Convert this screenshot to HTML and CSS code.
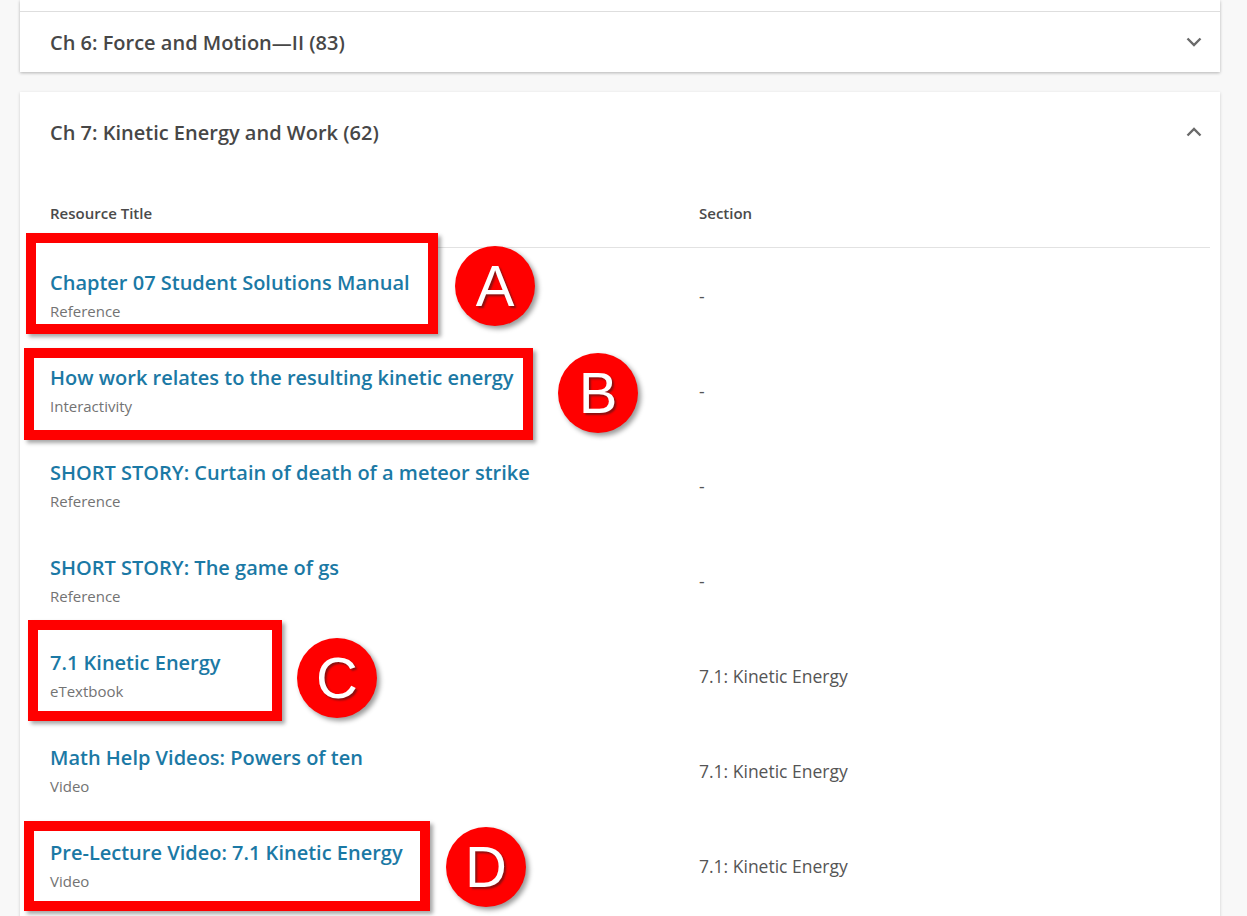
FILE: index.html
```html
<!DOCTYPE html>
<html lang="en">
<head>
<meta charset="utf-8">
<title>Resources</title>
<link rel="stylesheet" href="styles.css">
</head>
<body>
<div class="page">
  <div class="accordion">
    <div class="group">
      <div class="panel-stub"></div>
      <div class="panel-head bordered">
        <span class="panel-title">Ch 6: Force and Motion—II (83)</span>
        <svg class="chev" width="16" height="10" viewBox="0 0 16 10"><path d="M1.5 1.5 L8 8 L14.5 1.5" fill="none" stroke="#6a6a6a" stroke-width="2.4"/></svg>
      </div>
    </div>

    <div class="card">
      <div class="panel-head tall">
        <span class="panel-title">Ch 7: Kinetic Energy and Work (62)</span>
        <svg class="chev" width="16" height="10" viewBox="0 0 16 10"><path d="M1.5 8.5 L8 2 L14.5 8.5" fill="none" stroke="#6a6a6a" stroke-width="2.4"/></svg>
      </div>
      <div class="table">
        <div class="thead">
          <div class="th">Resource Title</div>
          <div class="th">Section</div>
        </div>
        <div class="row">
          <div class="cell title-cell"><a class="res-link">Chapter 07 Student Solutions Manual</a><span class="res-type">Reference</span></div>
          <div class="cell section">-</div>
        </div>
        <div class="row">
          <div class="cell title-cell"><a class="res-link">How work relates to the resulting kinetic energy</a><span class="res-type">Interactivity</span></div>
          <div class="cell section">-</div>
        </div>
        <div class="row">
          <div class="cell title-cell"><a class="res-link">SHORT STORY: Curtain of death of a meteor strike</a><span class="res-type">Reference</span></div>
          <div class="cell section">-</div>
        </div>
        <div class="row">
          <div class="cell title-cell"><a class="res-link">SHORT STORY: The game of gs</a><span class="res-type">Reference</span></div>
          <div class="cell section">-</div>
        </div>
        <div class="row">
          <div class="cell title-cell"><a class="res-link">7.1 Kinetic Energy</a><span class="res-type">eTextbook</span></div>
          <div class="cell section">7.1: Kinetic Energy</div>
        </div>
        <div class="row">
          <div class="cell title-cell"><a class="res-link">Math Help Videos: Powers of ten</a><span class="res-type">Video</span></div>
          <div class="cell section">7.1: Kinetic Energy</div>
        </div>
        <div class="row">
          <div class="cell title-cell"><a class="res-link">Pre-Lecture Video: 7.1 Kinetic Energy</a><span class="res-type">Video</span></div>
          <div class="cell section">7.1: Kinetic Energy</div>
        </div>
      </div>
    </div>
  </div>

  <div class="mark box box-a"></div>
  <div class="mark box box-b"></div>
  <div class="mark box box-c"></div>
  <div class="mark box box-d"></div>
  <div class="mark badge badge-a">A</div>
  <div class="mark badge badge-b">B</div>
  <div class="mark badge badge-c">C</div>
  <div class="mark badge badge-d">D</div>
</div>
</body>
</html>
```

FILE: styles.css
```css
html, body {
  margin: 0;
  padding: 0;
  background: #f8f8f8;
}
body {
  font-family: "Open Sans", "Liberation Sans", Arial, sans-serif;
  color: #444;
  height: 916px;
  overflow: hidden;
}
.page {
  position: relative;
  width: 1247px;
  height: 916px;
}
.accordion {
  padding: 0 27px 0 20px;
  display: flex;
  flex-direction: column;
  gap: 20px;
}
.group {
  background: #fff;
  box-shadow: 0 1px 3px rgba(0, 0, 0, 0.28);
}
.panel-stub {
  height: 11px;
}
.panel-head {
  display: flex;
  align-items: center;
  justify-content: space-between;
  height: 60px;
  padding: 0 18px 0 30px;
}
.panel-head.bordered {
  border-top: 1px solid #dedede;
}
.panel-head.tall {
  height: 80px;
}
.panel-title {
  font-size: 20px;
  font-weight: 600;
  color: #474747;
}
.chev {
  display: block;
}
.card {
  background: #fff;
  box-shadow: 0 1px 3px rgba(0, 0, 0, 0.18);
  padding-bottom: 40px;
}
.table {
  margin: 0 10px;
}
.thead, .row {
  display: grid;
  grid-template-columns: 649px 1fr;
}
.thead {
  border-bottom: 1px solid #e2e2e2;
}
.th {
  padding: 31px 20px 24px;
  font-size: 15px;
  line-height: 20px;
  font-weight: 600;
  color: #4a4a4a;
}
.cell {
  padding: 22px 20px;
  position: relative;
  z-index: 2;
}
.title-cell {
  display: flex;
  flex-direction: column;
  align-items: flex-start;
  gap: 5px;
}
.res-link {
  font-size: 20px;
  line-height: 26px;
  font-weight: 600;
  color: #1b79a5;
  text-decoration: none;
}
.res-type {
  font-size: 15px;
  line-height: 20px;
  color: #737373;
}
.section {
  display: flex;
  align-items: center;
  font-size: 17.5px;
  color: #555;
}

/* annotation overlay */
.mark {
  position: absolute;
  box-sizing: border-box;
}
.box {
  z-index: 1;
  background: #fff;
  border: 10px solid #ff0000;
  box-shadow: 3px 3px 4px rgba(0, 0, 0, 0.35);
}
.box-a { left: 26px; top: 233px; width: 412px; height: 101px; }
.box-b { left: 24px; top: 348px; width: 509px; height: 92px; }
.box-c { left: 28px; top: 620px; width: 254px; height: 101px; }
.box-d { left: 24px; top: 821px; width: 406px; height: 90px; }
.badge {
  z-index: 3;
  width: 80px;
  height: 80px;
  border-radius: 50%;
  background: #ff0000;
  box-shadow: 3px 3px 5px rgba(0, 0, 0, 0.4);
  color: #fff;
  font-family: "Liberation Sans", Arial, sans-serif;
  font-size: 58px;
  line-height: 80px;
  text-align: center;
  text-shadow: 2px 2px 2px #8a1010;
}
.badge-a { left: 455px; top: 246px; }
.badge-b { left: 558px; top: 353px; }
.badge-c { left: 297px; top: 638px; }
.badge-d { left: 446px; top: 827px; }
```
